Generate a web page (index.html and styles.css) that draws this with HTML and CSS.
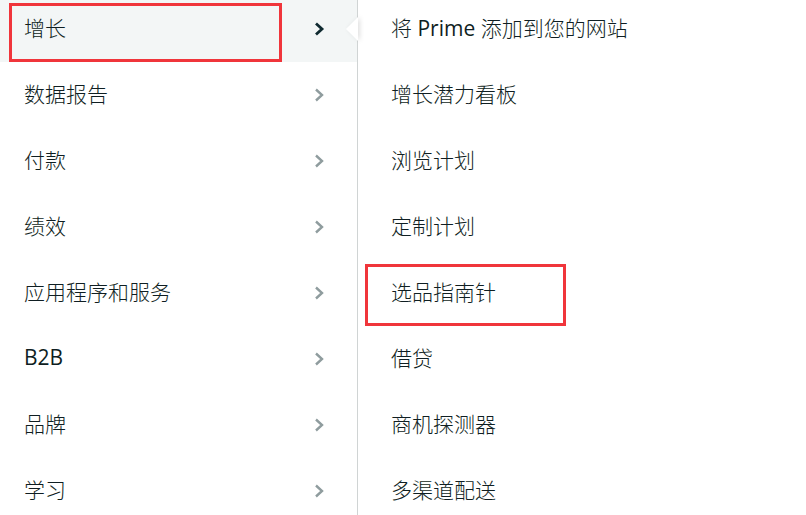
FILE: index.html
```html
<!DOCTYPE html>
<html lang="zh-CN">
<head>
<meta charset="utf-8">
<link rel="stylesheet" href="styles.css">
</head>
<body>
<div class="menu">
  <ul class="main">
    <li class="item active"><span>增长</span><svg class="chev" viewBox="0 0 12 14"><path d="M3 1.5 L9 7 L3 12.5" /></svg><i class="mark mark-a"></i></li>
    <li class="item"><span>数据报告</span><svg class="chev" viewBox="0 0 12 14"><path d="M3 1.5 L9 7 L3 12.5" /></svg></li>
    <li class="item"><span>付款</span><svg class="chev" viewBox="0 0 12 14"><path d="M3 1.5 L9 7 L3 12.5" /></svg></li>
    <li class="item"><span>绩效</span><svg class="chev" viewBox="0 0 12 14"><path d="M3 1.5 L9 7 L3 12.5" /></svg></li>
    <li class="item"><span>应用程序和服务</span><svg class="chev" viewBox="0 0 12 14"><path d="M3 1.5 L9 7 L3 12.5" /></svg></li>
    <li class="item"><span class="lat">B2B</span><svg class="chev" viewBox="0 0 12 14"><path d="M3 1.5 L9 7 L3 12.5" /></svg></li>
    <li class="item"><span>品牌</span><svg class="chev" viewBox="0 0 12 14"><path d="M3 1.5 L9 7 L3 12.5" /></svg></li>
    <li class="item"><span>学习</span><svg class="chev" viewBox="0 0 12 14"><path d="M3 1.5 L9 7 L3 12.5" /></svg></li>
  </ul>
  <ul class="sub">
    <li class="subitem notch-row"><span>将 <span class="lat">Prime</span> 添加到您的网站</span><i class="notch"></i></li>
    <li class="subitem"><span>增长潜力看板</span></li>
    <li class="subitem"><span>浏览计划</span></li>
    <li class="subitem"><span>定制计划</span></li>
    <li class="subitem"><span>选品指南针</span><i class="mark mark-b"></i></li>
    <li class="subitem"><span>借贷</span></li>
    <li class="subitem"><span>商机探测器</span></li>
    <li class="subitem"><span>多渠道配送</span></li>
  </ul>
</div>
</body>
</html>
```

FILE: styles.css
```css
html, body {
  margin: 0;
  padding: 0;
  background: #ffffff;
}
body {
  width: 806px;
  height: 515px;
  overflow: hidden;
  font-family: "Open Sans", "Noto Sans CJK SC", sans-serif;
  font-weight: 300;
  color: #0f1e22;
}
.lat {
  font-weight: 400;
}
ul {
  list-style: none;
  margin: 0;
  padding: 0;
}
.menu {
  display: flex;
  margin-top: -4px;
}
.main {
  width: 357px;
  border-right: 1px solid #d0d4d4;
  flex: none;
}
.item {
  position: relative;
  height: 66px;
  box-sizing: border-box;
  padding: 0 32px 4px 24px;
  display: flex;
  align-items: center;
  justify-content: space-between;
  font-size: 21px;
}
.item.active {
  background: #f3f6f6;
}
.chev {
  width: 12px;
  height: 14px;
  margin-top: 3px;
  fill: none;
  stroke: #8f9c9e;
  stroke-width: 2.4;
}
.active .chev {
  stroke: #0f2a30;
  stroke-width: 2.8;
}
.sub {
  flex: 1;
}
.subitem {
  position: relative;
  height: 66px;
  box-sizing: border-box;
  padding: 0 0 4px 33px;
  display: flex;
  align-items: center;
  font-size: 21px;
}
.notch {
  position: absolute;
  left: -12px;
  top: 21px;
  width: 0;
  height: 0;
  border-top: 12px solid transparent;
  border-bottom: 12px solid transparent;
  border-right: 12px solid #ffffff;
  filter: drop-shadow(2px 0 2px rgba(0,0,0,0.12));
}
.mark {
  position: absolute;
  border: 3px solid #f0353b;
  box-sizing: border-box;
}
.mark-a {
  left: 9px;
  top: 7px;
  width: 273px;
  height: 59px;
}
.mark-b {
  left: 7px;
  top: 4px;
  width: 201px;
  height: 62px;
}
```
